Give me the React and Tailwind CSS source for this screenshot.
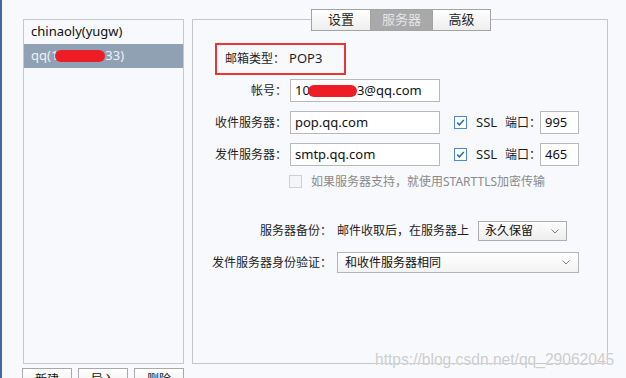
import React from 'react'

function Check ({ checked }) {
  if (!checked) {
    return <span className="inline-block w-[13px] h-[13px] border border-[#d0d0d0] bg-[#f4f5f7]" />
  }
  return (
    <svg width="13" height="13" viewBox="0 0 13 13" className="shrink-0">
      <rect x="0.5" y="0.5" width="12" height="12" fill="#fff" stroke="#4d8bd3" />
      <path d="M3.2 6.6 L5.4 8.8 L9.8 4" fill="none" stroke="#2c6fb8" strokeWidth="1.6" />
    </svg>
  )
}

function Chevron () {
  return (
    <svg width="8" height="5" viewBox="0 0 8 5">
      <path d="M0.5 0.5 L4 4 L7.5 0.5" fill="none" stroke="#7a7a7a" strokeWidth="1" />
    </svg>
  )
}

function Blob ({ w, className }) {
  return <span className={'inline-block h-[12px] rounded-full bg-[#ee1c24] align-middle ' + className} style={{ width: w }} />
}

function Label ({ w, children }) {
  return <div className="text-right shrink-0 whitespace-nowrap" style={{ width: w }}>{children}</div>
}

function Field ({ w, children }) {
  return (
    <div className="h-[23px] shrink-0 border border-[#b9b9b9] bg-white flex items-center pl-[4px] text-[13px] text-[#111] whitespace-nowrap overflow-hidden" style={{ width: w }}>
      {children}
    </div>
  )
}

export default function App () {
  return (
    <div className="w-[626px] h-[378px] overflow-hidden bg-[#f7f9fd] flex relative text-[12px] text-[#1e1e1e] font-['Noto_Sans','Noto_Sans_CJK_SC',sans-serif]">
      <div className="w-[2px] h-full shrink-0 bg-[#3e6a9c]" />

      {/* account list */}
      <div className="ml-[20px] pt-[19px] flex flex-col shrink-0">
        <div className="ml-[1px] w-[161px] h-[345px] shrink-0 border border-[#c8c8c8]">
          <div className="h-[24px] flex items-center pl-[7px] text-[13px] text-[#111]">chinaoly(yugw)</div>
          <div className="h-[24px] flex items-center pl-[7px] text-[13px] text-[#eef2f6] bg-[#8fa1b3] whitespace-nowrap">
            qq(1<Blob w="50px" className="-ml-[3px]" />33)
          </div>
        </div>
        <div className="mt-[4px] flex gap-[6px] shrink-0">
          {['新建', '导入', '删除'].map(t => (
            <div key={t} className="w-[50px] h-[24px] border border-[#a9a9a9] bg-gradient-to-b from-white to-[#ececec] text-center pt-[2px] text-[#111]">{t}</div>
          ))}
        </div>
      </div>

      {/* settings panel */}
      <div className="ml-[8px] mt-[19px] w-[416px] h-[345px] shrink-0 border border-[#c6c6c6] flex flex-col">
        <div className="-mt-[11px] ml-[118px] flex h-[22px] shrink-0 text-[13px]">
          <div className="w-[60px] border border-[#a3a3a3] bg-gradient-to-b from-white to-[#eeeeee] flex items-center justify-center">设置</div>
          <div className="w-[61px] border-y border-[#a3a3a3] bg-[#a9a9a9] text-[#e6e6e6] flex items-center justify-center">服务器</div>
          <div className="w-[59px] border border-[#a3a3a3] bg-gradient-to-b from-white to-[#eeeeee] flex items-center justify-center">高级</div>
        </div>

        <div className="mt-[12px] ml-[22px] w-[131px] h-[32px] shrink-0 border-2 border-[#ee3333] flex items-center pl-[8px]">
          <span>邮箱类型：</span>
          <span className="ml-[4px] text-[13px]">POP3</span>
        </div>

        <div className="mt-[4px] flex items-center">
          <Label w="94px">帐号：</Label>
          <div className="ml-[3px]">
            <Field w="150px">10<Blob w="49px" className="-ml-[2px]" />3@qq.com</Field>
          </div>
        </div>

        {[['收件服务器：', 'pop.qq.com', '995'], ['发件服务器：', 'smtp.qq.com', '465']].map(([l, v, p]) => (
          <div key={l} className="mt-[9px] flex items-center">
            <Label w="94px">{l}</Label>
            <div className="ml-[3px]"><Field w="150px">{v}</Field></div>
            <div className="ml-[14px] flex shrink-0"><Check checked /></div>
            <span className="ml-[9px] w-[20px] shrink-0 text-[13px]">SSL</span>
            <span className="ml-[9px] w-[35px] shrink-0 whitespace-nowrap">端口：</span>
            <Field w="39px">{p}</Field>
          </div>
        ))}

        <div className="mt-[9px] flex items-center h-[13px]">
          <div className="ml-[96px] flex"><Check /></div>
          <span className="ml-[9px] text-[#8a8a8a]">如果服务器支持，就使用STARTTLS加密传输</span>
        </div>

        <div className="mt-[33px] flex items-center">
          <Label w="139px">服务器备份：</Label>
          <span className="ml-[5px] w-[141px] shrink-0 whitespace-nowrap">邮件收取后，在服务器上</span>
          <div className="w-[89px] h-[20px] shrink-0 border border-[#adadad] bg-gradient-to-b from-[#fdfdfd] to-[#ededed] flex items-center justify-between pl-[6px] pr-[7px]">
            <span className="text-[#111]">永久保留</span>
            <Chevron />
          </div>
        </div>

        <div className="mt-[11px] flex items-center">
          <Label w="139px">发件服务器身份验证：</Label>
          <div className="ml-[5px] w-[242px] h-[21px] shrink-0 border border-[#b4b4b4] bg-gradient-to-b from-white to-[#f3f3f3] flex items-center justify-between pl-[7px] pr-[8px]">
            <span className="text-[#111]">和收件服务器相同</span>
            <Chevron />
          </div>
        </div>
      </div>

      {/* watermark */}
      <div className="absolute left-[375px] top-[348px] text-[15.6px] text-[#cdcdcd] font-['Liberation_Sans',Arial,sans-serif] [text-shadow:0_0_2px_#ffffff]">
        https://blog.csdn.net/qq_29062045
      </div>
    </div>
  )
}
